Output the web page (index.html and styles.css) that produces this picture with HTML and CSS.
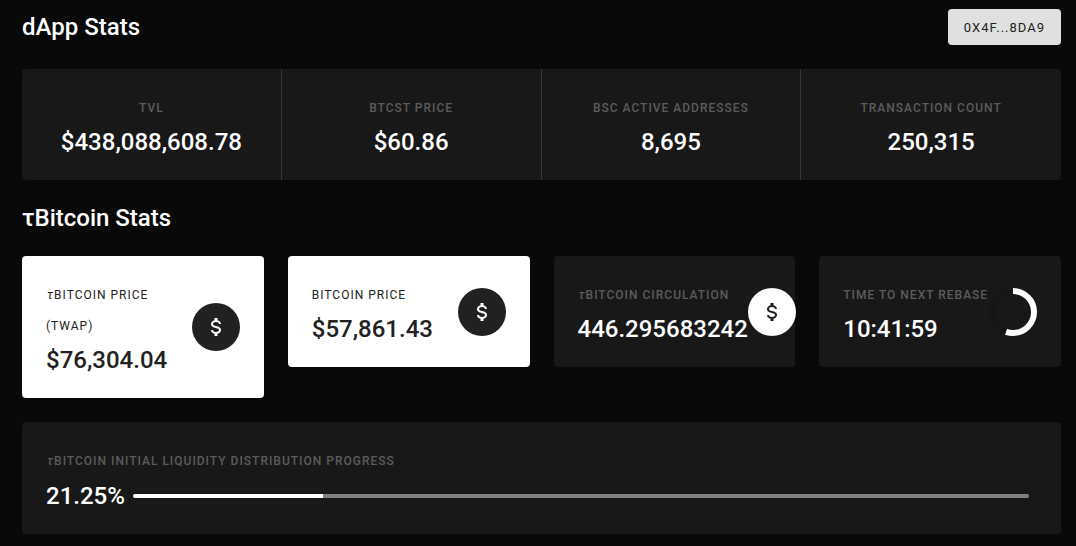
FILE: index.html
```html
<!DOCTYPE html>
<html lang="en">
<head>
  <meta charset="UTF-8">
  <meta name="viewport" content="width=device-width, initial-scale=1.0">
  <title>dApp Stats</title>
  <link rel="stylesheet" href="styles.css">
</head>
<body>
  <!-- Currency icon shared by the price cards -->
  <svg class="sprite" aria-hidden="true">
    <symbol id="usd" viewBox="0 0 24 24">
      <path d="M7,15H9C9,16.08 10.37,17 12,17C13.63,17 15,16.08 15,15C15,13.9 13.96,13.5 11.76,12.97C9.64,12.44 7,11.78 7,9C7,7.21 8.47,5.69 10.5,5.18V3H13.5V5.18C15.53,5.69 17,7.21 17,9H15C15,7.92 13.63,7 12,7C10.37,7 9,7.92 9,9C9,10.1 10.04,10.5 12.24,11.03C14.36,11.56 17,12.22 17,15C17,16.79 15.53,18.31 13.5,18.82V21H10.5V18.82C8.47,18.31 7,16.79 7,15Z"/>
    </symbol>
  </svg>

  <header>
    <h2>dApp Stats</h2>
    <button class="wallet" type="button">0X4F...8DA9</button>
  </header>

  <!-- dApp totals -->
  <section class="totals">
    <div class="total">
      <p class="label">TVL</p>
      <p class="value">$438,088,608.78</p>
    </div>
    <div class="total">
      <p class="label">BTCST PRICE</p>
      <p class="value">$60.86</p>
    </div>
    <div class="total">
      <p class="label">BSC ACTIVE ADDRESSES</p>
      <p class="value">8,695</p>
    </div>
    <div class="total">
      <p class="label">TRANSACTION COUNT</p>
      <p class="value">250,315</p>
    </div>
  </section>

  <h2 class="subtitle">τBitcoin Stats</h2>

  <!-- Bitcoin cards -->
  <section class="cards">
    <div class="card light">
      <div>
        <p class="label"><i>τ</i>BITCOIN PRICE (TWAP)</p>
        <p class="value">$76,304.04</p>
      </div>
      <span class="avatar"><svg class="icon"><use href="#usd"/></svg></span>
    </div>
    <div class="card light">
      <div>
        <p class="label">BITCOIN PRICE</p>
        <p class="value">$57,861.43</p>
      </div>
      <span class="avatar"><svg class="icon"><use href="#usd"/></svg></span>
    </div>
    <div class="card">
      <div>
        <p class="label"><i>τ</i>BITCOIN CIRCULATION</p>
        <p class="value">446.295683242</p>
      </div>
      <span class="avatar"><svg class="icon"><use href="#usd"/></svg></span>
    </div>
    <div class="card">
      <div>
        <p class="label">TIME TO NEXT REBASE</p>
        <p class="value">10:41:59</p>
      </div>
      <svg class="ring" viewBox="0 0 48 48">
        <circle class="ring-track" cx="24" cy="24" r="21"/>
        <circle class="ring-fill" cx="24" cy="24" r="21" pathLength="100" stroke-dasharray="55.4 100" transform="rotate(-90 24 24)"/>
      </svg>
    </div>
  </section>

  <!-- Distribution progress -->
  <section class="distribution">
    <label class="label" for="progress"><i>τ</i>BITCOIN INITIAL LIQUIDITY DISTRIBUTION PROGRESS</label>
    <div class="progress-row">
      <p class="value">21.25%</p>
      <progress id="progress" value="21.25" max="100"></progress>
    </div>
  </section>
</body>
</html>
```
FILE: styles.css
```css
* {
  box-sizing: border-box;
}

body {
  margin: 0;
  padding: 9px 15px 12px 22px;
  background-color: #090909;
  color: #fff;
  font-family: Roboto, "Liberation Sans", sans-serif;
}

h2, p {
  margin: 0;
}

h2 {
  font-size: 24px;
  font-weight: 500;
  line-height: 32px;
}

.sprite {
  display: none;
}

header {
  display: flex;
  justify-content: space-between;
  align-items: center;
  margin-bottom: 24px;
}

.wallet {
  height: 36px;
  padding: 0 16px;
  border: none;
  border-radius: 4px;
  background-color: #e0e0e0;
  color: #212121;
  font-family: inherit;
  font-size: 13px;
  letter-spacing: 1px;
  cursor: pointer;
}

.label {
  display: block;
  color: #5c5c5c;
  font-size: 12px;
  font-weight: 500;
  line-height: 31px;
  letter-spacing: 1px;
}

.label i {
  padding-left: 1px;
}

.value {
  font-size: 24px;
  font-weight: 500;
  line-height: 28px;
}

/* Totals strip */
.totals {
  display: grid;
  grid-template-columns: repeat(4, 1fr);
  border-radius: 4px;
  background-color: #181818;
  text-align: center;
}

.total {
  padding: 24px;
  border-right: 1px solid #363636;
}

.total:last-child {
  border-right: none;
}

.total .value,
.card .value {
  padding-top: 4px;
}

.subtitle {
  margin: 22px 0;
}

/* Cards */
.cards {
  display: grid;
  grid-template-columns: repeat(4, minmax(0, 1fr));
  align-items: start;
  gap: 24px;
  margin-bottom: 24px;
}

.card {
  display: flex;
  justify-content: space-between;
  align-items: center;
  padding: 24px;
  border-radius: 4px;
  background-color: #181818;
}

.light {
  background-color: #fff;
  color: #212121;
}

.light .label {
  color: #212121;
  font-weight: 400;
}

.avatar {
  display: flex;
  flex-shrink: 0;
  justify-content: center;
  align-items: center;
  width: 48px;
  height: 48px;
  border-radius: 50%;
  background-color: #fff;
  color: #212121;
}

.light .avatar {
  background-color: #212121;
  color: #fff;
}

.icon {
  width: 24px;
  height: 24px;
  fill: currentColor;
}

.ring {
  flex-shrink: 0;
  width: 48px;
  height: 48px;
  fill: none;
  stroke-width: 6;
}

.ring-track {
  stroke: #161616;
}

.ring-fill {
  stroke: #fff;
}

/* Distribution */
.distribution {
  padding: 24px;
  border-radius: 4px;
  background-color: #181818;
}

.progress-row {
  display: flex;
  align-items: center;
  gap: 8px;
  padding: 5px 8px 0 0;
}

progress {
  flex: 1;
  height: 4px;
  border: none;
  border-radius: 2px;
  overflow: hidden;
  appearance: none;
}

progress::-webkit-progress-bar {
  background-color: #808080;
}

progress::-webkit-progress-value {
  background-color: #fff;
}
```
